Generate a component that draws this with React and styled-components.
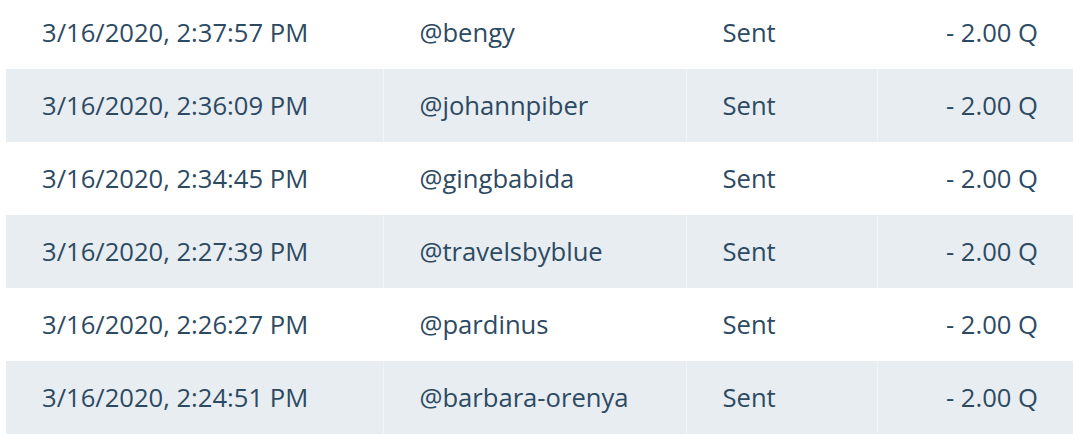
import React from 'react'
import styled, { createGlobalStyle } from 'styled-components'

const GlobalStyle = createGlobalStyle`
  body {
    margin: 0;
    background: #fff;
    font-family: 'Open Sans', 'Noto Sans', sans-serif;
    overflow: hidden;
  }
`

const transactions = [
  { date: '3/16/2020, 2:37:57 PM', user: '@bengy', status: 'Sent', amount: '- 2.00 Q' },
  { date: '3/16/2020, 2:36:09 PM', user: '@johannpiber', status: 'Sent', amount: '- 2.00 Q' },
  { date: '3/16/2020, 2:34:45 PM', user: '@gingbabida', status: 'Sent', amount: '- 2.00 Q' },
  { date: '3/16/2020, 2:27:39 PM', user: '@travelsbyblue', status: 'Sent', amount: '- 2.00 Q' },
  { date: '3/16/2020, 2:26:27 PM', user: '@pardinus', status: 'Sent', amount: '- 2.00 Q' },
  { date: '3/16/2020, 2:24:51 PM', user: '@barbara-orenya', status: 'Sent', amount: '- 2.00 Q' }
]

function App () {
  return (
    <>
      <GlobalStyle />
      <Wrapper>
        <Table>
          <colgroup>
            <col style={{ width: 377 }} />
            <col style={{ width: 303 }} />
            <col style={{ width: 191 }} />
            <col />
          </colgroup>
          <tbody>
            {transactions.map((tx, i) => (
              <Row key={tx.date} $striped={i % 2 === 1}>
                <Cell>{tx.date}</Cell>
                <Cell>{tx.user}</Cell>
                <Cell>{tx.status}</Cell>
                <Cell $right>{tx.amount}</Cell>
              </Row>
            ))}
          </tbody>
        </Table>
      </Wrapper>
    </>
  )
}

export default App

const Wrapper = styled.div`
    padding-left: 6px;
`

const Table = styled.table`
    width: 100%;
    margin-top: -4px;
    border-collapse: collapse;
    table-layout: fixed;
`

const Row = styled.tr`
    height: 73px;
    background: ${props => props.$striped ? '#e8edf1' : '#fff'};
`

const Cell = styled.td`
    padding: 0 35px 0 36px;
    font-size: 25.6px;
    color: #2d4a63;
    white-space: nowrap;
    vertical-align: middle;
    text-align: ${props => props.$right ? 'right' : 'left'};
    & + & {
        border-left: 1px solid rgba(255, 255, 255, 0.45);
    }
`
